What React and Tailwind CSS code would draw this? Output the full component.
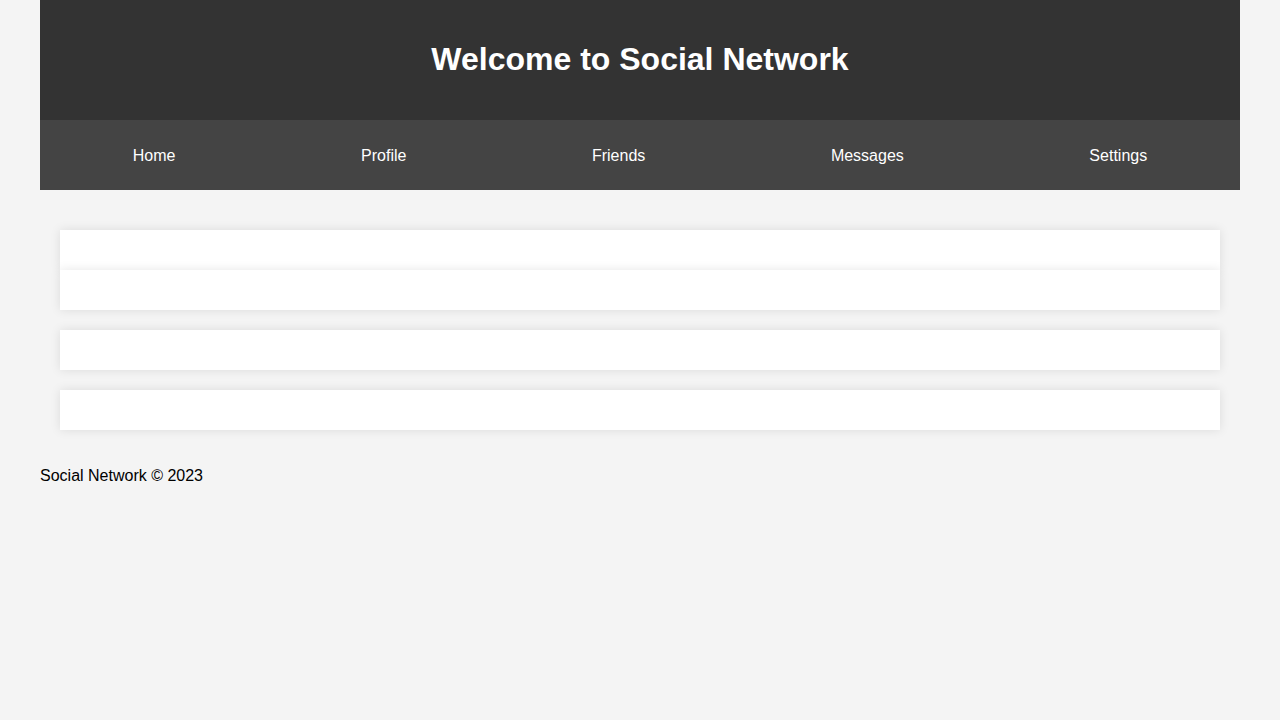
export default function App() {
  const links = ['Home', 'Profile', 'Friends', 'Messages', 'Settings'];

  return (
    <div className="min-h-screen bg-[#f4f4f4] font-['Liberation_Sans',Arial,sans-serif] text-black">
      <div className="mx-10">
        <header className="h-[120px] bg-[#333] flex items-center justify-center pb-0.5">
          <h1 className="text-[32px] font-bold text-white">Welcome to Social Network</h1>
        </header>

        <nav className="h-[70px] bg-[#444] flex items-center justify-around pt-0.5">
          {links.map((link) => (
            <a key={link} href="#" className="text-white text-base">
              {link}
            </a>
          ))}
        </nav>

        <main className="px-5 pt-10 pb-5">
          <div className="bg-white h-10 shadow-[0_0_10px_rgba(0,0,0,0.1)]"></div>
          <div className="bg-white h-10 shadow-[0_0_10px_rgba(0,0,0,0.1)]"></div>
          <div className="bg-white h-10 mt-5 shadow-[0_0_10px_rgba(0,0,0,0.1)]"></div>
          <div className="bg-white h-10 mt-5 shadow-[0_0_10px_rgba(0,0,0,0.1)]"></div>
        </main>

        <footer className="pt-[17px] text-base leading-[18px]">
          Social Network © 2023
        </footer>
      </div>
    </div>
  );
}
